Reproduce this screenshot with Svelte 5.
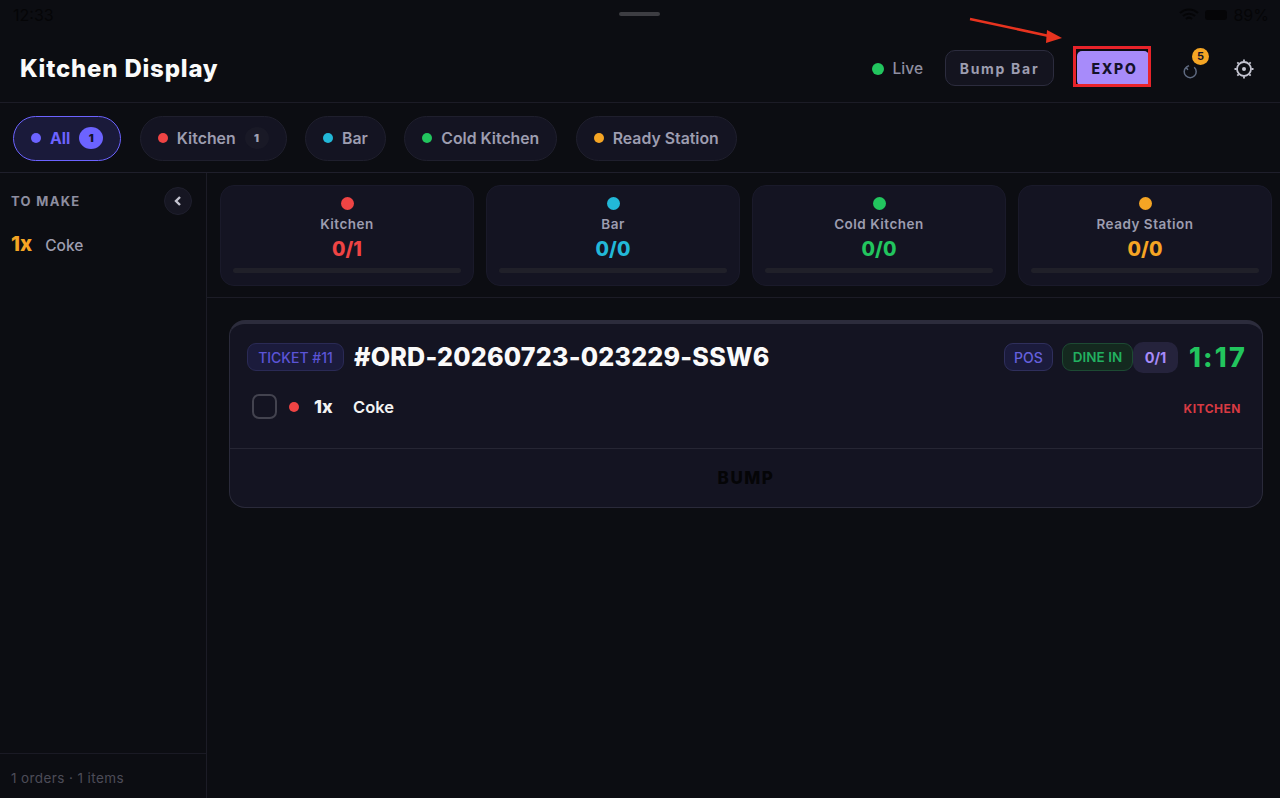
<script>
  const filters = [
    { name: 'All', color: '#6c63ff', count: 1, active: true },
    { name: 'Kitchen', color: '#ef4444', count: 1 },
    { name: 'Bar', color: '#22b8d8' },
    { name: 'Cold Kitchen', color: '#22c55e' },
    { name: 'Ready Station', color: '#f5a524' }
  ];
  const stations = [
    { name: 'Kitchen', color: '#ef4444', value: '0/1' },
    { name: 'Bar', color: '#22b8d8', value: '0/0' },
    { name: 'Cold Kitchen', color: '#22c55e', value: '0/0' },
    { name: 'Ready Station', color: '#f5a524', value: '0/0' }
  ];
</script>

<div class="page">
  <div class="status">
    <span>12:33</span>
    <span class="status-right">
      <svg width="20" height="14" viewBox="0 0 20 14"><path d="M1 5a13 13 0 0 1 18 0M4 8a9 9 0 0 1 12 0M7 11a4.500 4.500 0 0 1 6 0" fill="none" stroke="#050507" stroke-width="2"/></svg>
      <span class="battery"></span>
      <span>89%</span>
    </span>
  </div>
  <div class="grabber"></div>

  <header>
    <h1>Kitchen Display</h1>
    <div class="actions">
      <span class="live"><i></i>Live</span>
      <button class="bump-bar">Bump Bar</button>
      <button class="expo">EXPO</button>
      <span class="refresh">
        <svg width="16" height="16" viewBox="0 0 16 16"><path d="M12.200 3.200A6 6 0 1 1 4.200 3.200M4.200 3.200 7 1.600M4.200 3.200 5.800 6" fill="none" stroke="#5f6a80" stroke-width="1.500"/></svg>
        <b>5</b>
      </span>
      <svg class="gear" width="22" height="22" viewBox="0 0 22 22"><circle cx="11" cy="11" r="7" fill="none" stroke="#c4c4d0" stroke-width="1.800"/><circle cx="11" cy="11" r="2" fill="#c4c4d0"/><path d="M11 1.500v2M11 18.500v2M1.500 11h2M18.500 11h2M4.300 4.300l1.400 1.400M16.300 16.300l1.400 1.400M4.300 17.700l1.400-1.400M16.300 5.700l1.400-1.400" stroke="#c4c4d0" stroke-width="1.800"/></svg>
    </div>
  </header>

  <nav>
    {#each filters as f}
      <div class="pill" class:active={f.active}>
        <i style="background:{f.color}"></i>
        <span>{f.name}</span>
        {#if f.count}<b>{f.count}</b>{/if}
      </div>
    {/each}
  </nav>

  <div class="body">
    <aside>
      <div class="side-head">
        <span>TO MAKE</span>
        <span class="collapse">
          <svg width="10" height="12" viewBox="0 0 10 12"><path d="M7 2 3 6l4 4" fill="none" stroke="#c4c4d0" stroke-width="2.400"/></svg>
        </span>
      </div>
      <div class="side-item"><b>1x</b><span>Coke</span></div>
      <div class="side-foot">1 orders · 1 items</div>
    </aside>

    <main>
      <section class="summary">
        {#each stations as s}
          <div class="card">
            <i style="background:{s.color}"></i>
            <span class="card-name">{s.name}</span>
            <strong style="color:{s.color}">{s.value}</strong>
            <div class="track"></div>
          </div>
        {/each}
      </section>

      <section class="tickets">
        <article>
          <div class="t-head">
            <span class="tag ticket">TICKET #11</span>
            <h2>#ORD-20260723-023229-SSW6</h2>
            <span class="t-right">
              <span class="tag pos">POS</span>
              <span class="tag dine">DINE IN</span>
              <span class="ratio">0/1</span>
              <span class="timer">1:17</span>
            </span>
          </div>
          <div class="t-item">
            <span class="check"></span>
            <i></i>
            <b>1x</b>
            <span class="t-name">Coke</span>
            <span class="t-station">KITCHEN</span>
          </div>
          <div class="t-bump">BUMP</div>
        </article>
      </section>
    </main>
  </div>

  <div class="mark"></div>
  <svg class="arrow" width="100" height="30" viewBox="0 0 100 30"><path d="M1 2 80 19" stroke="#e8331f" stroke-width="2.500"/><path d="M93 21 78 13 77 26Z" fill="#e8331f"/></svg>
</div>

<style>
  :global(body) { margin: 0; background: #0c0d12; }
  .page {
    position: relative;
    width: 1280px;
    height: 798px;
    overflow: hidden;
    display: flex;
    flex-direction: column;
    background: #0c0d12;
    font-family: Inter, "Noto Sans", sans-serif;
    color: #fff;
  }
  i { display: block; border-radius: 50%; flex: none; }
  button { font-family: inherit; }

  .status {
    position: absolute;
    top: 6px; left: 13px; right: 11px;
    display: flex;
    justify-content: space-between;
    font-size: 16px;
    line-height: 18px;
    color: #050507;
  }
  .status-right { display: flex; align-items: center; gap: 6px; }
  .battery { width: 22px; height: 10px; border-radius: 3px; background: #050507; }
  .grabber {
    position: absolute;
    top: 12px; left: 619px;
    width: 41px; height: 4px;
    border-radius: 2px;
    background: #3d3d42;
  }

  header {
    height: 103px;
    flex: none;
    box-sizing: border-box;
    border-bottom: 1px solid #1c1c26;
    padding: 35px 25px 0 20px;
    display: flex;
    justify-content: space-between;
    align-items: center;
  }
  h1 { margin: 0; font-size: 24px; font-weight: 800; letter-spacing: 0.800px; color: #fafafa; }
  .actions { display: flex; align-items: center; }
  .live { display: flex; align-items: center; gap: 9px; font-size: 15.500px; font-weight: 500; color: #8e8ea0; }
  .live i { width: 12px; height: 12px; background: #22c55e; }
  .bump-bar {
    margin: -1px 0 0 22px;
    width: 109px; height: 36px;
    border-radius: 10px;
    border: 1.500px solid #2c2c3e;
    background: #14141f;
    color: #9d9db0;
    font-size: 14px;
    font-weight: 700;
    letter-spacing: 1.700px;
    padding: 0;
  }
  .expo {
    margin-left: 23px;
    width: 72px; height: 35px;
    border-radius: 5px;
    border: none;
    background: #a78bfa;
    color: #14122a;
    font-size: 14px;
    font-weight: 800;
    letter-spacing: 1.700px;
    padding: 0 0 0 3px;
  }
  .refresh { position: relative; margin-left: 33px; width: 16px; height: 16px; margin-top: 6px; }
  .refresh svg { display: block; }
  .refresh b {
    position: absolute;
    top: -16px; left: 10px;
    width: 17px; height: 17px;
    border-radius: 50%;
    background: #f5a524;
    color: #14122a;
    font-size: 11px;
    line-height: 17px;
    text-align: center;
  }
  .gear { margin-left: 35px; }

  nav {
    height: 70px;
    flex: none;
    box-sizing: border-box;
    border-bottom: 1px solid #1f1f2b;
    padding: 1px 13px 0;
    display: flex;
    align-items: center;
    gap: 18.500px;
  }
  .pill {
    height: 45px;
    box-sizing: border-box;
    display: flex;
    align-items: center;
    gap: 9px;
    padding: 0 17px;
    border-radius: 23px;
    background: #141422;
    border: 1px solid #1f1f2d;
    font-size: 15.800px;
    font-weight: 600;
    color: #9d9db0;
  }
  .pill i { width: 10px; height: 10px; }
  .pill b {
    width: 24px; height: 22px;
    border-radius: 50%;
    background: #191926;
    color: #a0a0b2;
    font-size: 11px;
    line-height: 22px;
    text-align: center;
  }
  .pill.active {
    background: #1a1a3a;
    border-color: #6c63ff;
    color: #6c63ff;
    font-weight: 700;
  }
  .pill.active b { background: #6c63ff; color: #14122a; }

  .body { flex: 1; display: flex; min-height: 0; }
  aside {
    width: 207px;
    flex: none;
    box-sizing: border-box;
    border-right: 1px solid #1c1c26;
    display: flex;
    flex-direction: column;
  }
  .side-head {
    display: flex;
    justify-content: space-between;
    align-items: center;
    padding: 14px 14px 0 11px;
    font-size: 13px;
    font-weight: 700;
    letter-spacing: 1.300px;
    color: #8e8ea0;
  }
  .collapse {
    width: 28px; height: 28px;
    border-radius: 50%;
    background: #161622;
    border: 1px solid #1f1f2d;
    box-sizing: border-box;
    display: flex;
    align-items: center;
    justify-content: center;
  }
  .side-item {
    display: flex;
    align-items: baseline;
    gap: 13px;
    padding: 16px 11px 0;
    font-size: 15.500px;
    font-weight: 500;
    color: #9d9db0;
  }
  .side-item b { color: #f5a524; font-size: 20.500px; font-weight: 800; }
  .side-foot {
    margin-top: auto;
    height: 45px;
    box-sizing: border-box;
    border-top: 1px solid #1a1a24;
    padding: 4px 0 0 11px;
    display: flex;
    align-items: center;
    font-size: 13.500px;
    letter-spacing: 0.400px;
    color: #4c4c58;
  }

  main { flex: 1; min-width: 0; display: flex; flex-direction: column; }
  .summary {
    display: grid;
    grid-template-columns: repeat(4, 1fr);
    gap: 12px;
    padding: 12px 8px 11px 13px;
    border-bottom: 1px solid #1c1c26;
  }
  .card {
    height: 101px;
    box-sizing: border-box;
    padding: 11px 12px 0;
    background: #141422;
    border: 1px solid #1a1a2a;
    border-radius: 14px;
    display: flex;
    flex-direction: column;
    align-items: center;
  }
  .card i { width: 13px; height: 13px; }
  .card-name { margin-top: 6px; font-size: 13.500px; line-height: 17px; font-weight: 600; letter-spacing: 0.500px; color: #9d9db0; }
  .card strong { margin-top: 4px; font-size: 19.500px; line-height: 24px; font-weight: 800; }
  .track { margin-top: 7px; width: 100%; height: 5px; border-radius: 3px; background: #202029; }

  .tickets { padding: 22px 17px 0 22px; }
  article {
    height: 188px;
    box-sizing: border-box;
    border: 1px solid #2a2a3a;
    border-top: 4px solid #2c2c3c;
    border-radius: 16px;
    background: #141422;
    display: flex;
    flex-direction: column;
  }
  .t-head {
    display: flex;
    align-items: center;
    height: 50px;
    padding: 16px 17px 0;
    box-sizing: border-box;
  }
  .tag {
    height: 28px;
    box-sizing: border-box;
    border-radius: 9px;
    display: flex;
    align-items: center;
    justify-content: center;
    font-size: 14px;
    font-weight: 500;
  }
  .ticket { width: 97px; background: #1b1b3c; border: 1px solid #2a2a55; color: #5b54d6; }
  h2 {
    margin: 0 0 0 10px;
    font-size: 25.100px;
    font-weight: 800;
    letter-spacing: 0.200px;
    color: #fafafa;
  }
  .t-right { margin-left: auto; display: flex; align-items: center; }
  .pos { width: 49px; background: #1b1b3c; border: 1px solid #2f2f5c; color: #6560dd; margin-right: 9px; }
  .dine { width: 71px; background: #14291f; border: 1px solid #1d4a33; color: #22b060; font-weight: 600; font-size: 13.500px; }
  .ratio {
    width: 45px; height: 31px;
    border-radius: 10px;
    background: #25233c;
    color: #a78bfa;
    font-size: 14.500px;
    font-weight: 700;
    display: flex;
    align-items: center;
    justify-content: center;
  }
  .timer { margin-left: 11px; width: 56px; font-size: 27px; font-weight: 800; letter-spacing: 2.200px; color: #22c55e; }

  .t-item {
    height: 74px;
    box-sizing: border-box;
    padding: 0 21px 9px 22px;
    display: flex;
    align-items: center;
    font-size: 16.500px;
    font-weight: 600;
    color: #f2f2f2;
  }
  .check { width: 25px; height: 25px; box-sizing: border-box; border: 2px solid #43434f; border-radius: 7px; }
  .t-item i { width: 10px; height: 10px; background: #ef4444; margin-left: 12px; }
  .t-item b { margin-left: 15px; width: 39px; font-size: 18px; font-weight: 800; }
  .t-station { margin: 3px 0 0 auto; font-size: 12px; font-weight: 700; letter-spacing: 0.500px; color: #d83a42; }

  .t-bump {
    flex: 1;
    border-top: 1px solid #262634;
    display: flex;
    align-items: center;
    justify-content: center;
    font-size: 17px;
    font-weight: 800;
    letter-spacing: 1.500px;
    color: #050507;
  }

  .mark {
    position: absolute;
    left: 1073px; top: 46px;
    width: 78px; height: 41px;
    box-sizing: border-box;
    border: 3px solid #e8232a;
  }
  .arrow { position: absolute; left: 969px; top: 17px; }
</style>
